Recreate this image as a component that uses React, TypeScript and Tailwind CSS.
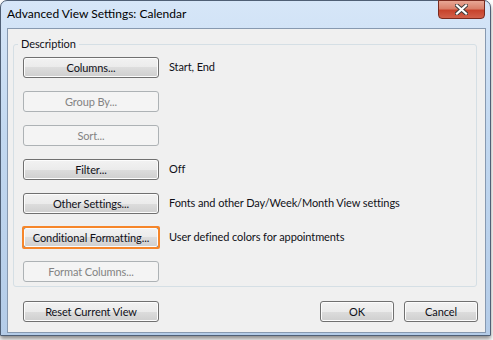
import React from 'react';

const font = { fontFamily: 'Lato, "Noto Sans", sans-serif' };

type BtnProps = {
  label: string;
  width?: string;
  disabled?: boolean;
  highlight?: boolean;
};

const WinButton = ({ label, width = 'w-[136px]', disabled, highlight }: BtnProps) => {
  const base = `${width} h-[21px] rounded-[3px] border text-[11px] tracking-[-0.1px] leading-none whitespace-nowrap flex items-center justify-center`;
  if (disabled) {
    return (
      <div className={`${base} border-[#adb2b5] bg-[#f4f4f4] text-[#838383]`}>{label}</div>
    );
  }
  const btn = (
    <div
      className={`${base} border-[#707070] text-[#101018] bg-[linear-gradient(to_bottom,#f2f2f2_0%,#ebebeb_50%,#dddddd_50%,#cfcfcf_100%)] shadow-[inset_0_0_0_1px_#fcfcfc]`}
    >
      {label}
    </div>
  );
  if (highlight) {
    return <div className="outline-2 outline-[#f6862a] -outline-offset-1 rounded-[1px]">{btn}</div>;
  }
  return btn;
};

const rows: { label: string; text?: string; disabled?: boolean; highlight?: boolean }[] = [
  { label: 'Columns...', text: 'Start, End' },
  { label: 'Group By...', disabled: true },
  { label: 'Sort...', disabled: true },
  { label: 'Filter...', text: 'Off' },
  { label: 'Other Settings...', text: 'Fonts and other Day/Week/Month View settings' },
  { label: 'Conditional Formatting...', text: 'User defined colors for appointments', highlight: true },
  { label: 'Format Columns...', disabled: true },
];

export default function App() {
  return (
    <div className="w-[493px] h-[340px] bg-white overflow-hidden" style={font}>
      <div className="w-[491px] h-[336px] rounded-t-[7px] border border-[#4f5f75] bg-[linear-gradient(to_bottom,#d6e6f8_0%,#c2d8f0_40%,#b4cce8_100%)] shadow-[0_3px_4px_rgba(0,0,0,0.45)] flex flex-col">
        {/* Title bar */}
        <div className="h-[27px] flex items-start justify-between pl-[6px] pr-[5px]">
          <div className="pt-[7px] text-[12px] leading-none text-black">Advanced View Settings: Calendar</div>
          <div className="w-[47px] h-[19px] -mt-px rounded-b-[4px] border border-[#7a2a1e] bg-[linear-gradient(to_bottom,#e8a795_0%,#d9806a_45%,#c7432c_55%,#d2604a_100%)] flex items-center justify-center">
            <svg width="13" height="11" viewBox="0 0 13 11">
              <path d="M2 1.5 L11 9.5 M11 1.5 L2 9.5" stroke="#3a3a3a" strokeWidth="4" strokeLinecap="square" />
              <path d="M2 1.5 L11 9.5 M11 1.5 L2 9.5" stroke="#ffffff" strokeWidth="2.2" strokeLinecap="square" />
            </svg>
          </div>
        </div>
        {/* Client area */}
        <div className="ml-[6px] mr-[4px] mb-[2px] flex-1 border border-[#8799b0] bg-[#f0f0f0] text-[11px] tracking-[-0.1px] text-[#101018] flex flex-col">
          <fieldset className="mt-[8px] ml-[5px] mr-[8px] h-[250px] border border-[#d5dfe5] rounded-[3px] px-[9px] pt-[6px]">
            <legend className="-ml-[5px] px-[3px] text-[11px] leading-[14px]">Description</legend>
            <div className="flex flex-col gap-[13px]">
              {rows.map((r) => (
                <div key={r.label} className="flex items-center gap-[10px] h-[21px]">
                  <WinButton label={r.label} disabled={r.disabled} highlight={r.highlight} />
                  {r.text && <span className="whitespace-nowrap">{r.text}</span>}
                </div>
              ))}
            </div>
          </fieldset>
          <div className="mt-[14px] ml-[15px] mr-[7px] flex items-center">
            <WinButton label="Reset Current View" />
            <div className="ml-auto flex gap-[10px]">
              <WinButton label="OK" width="w-[74px]" />
              <WinButton label="Cancel" width="w-[74px]" />
            </div>
          </div>
        </div>
      </div>
    </div>
  );
}
